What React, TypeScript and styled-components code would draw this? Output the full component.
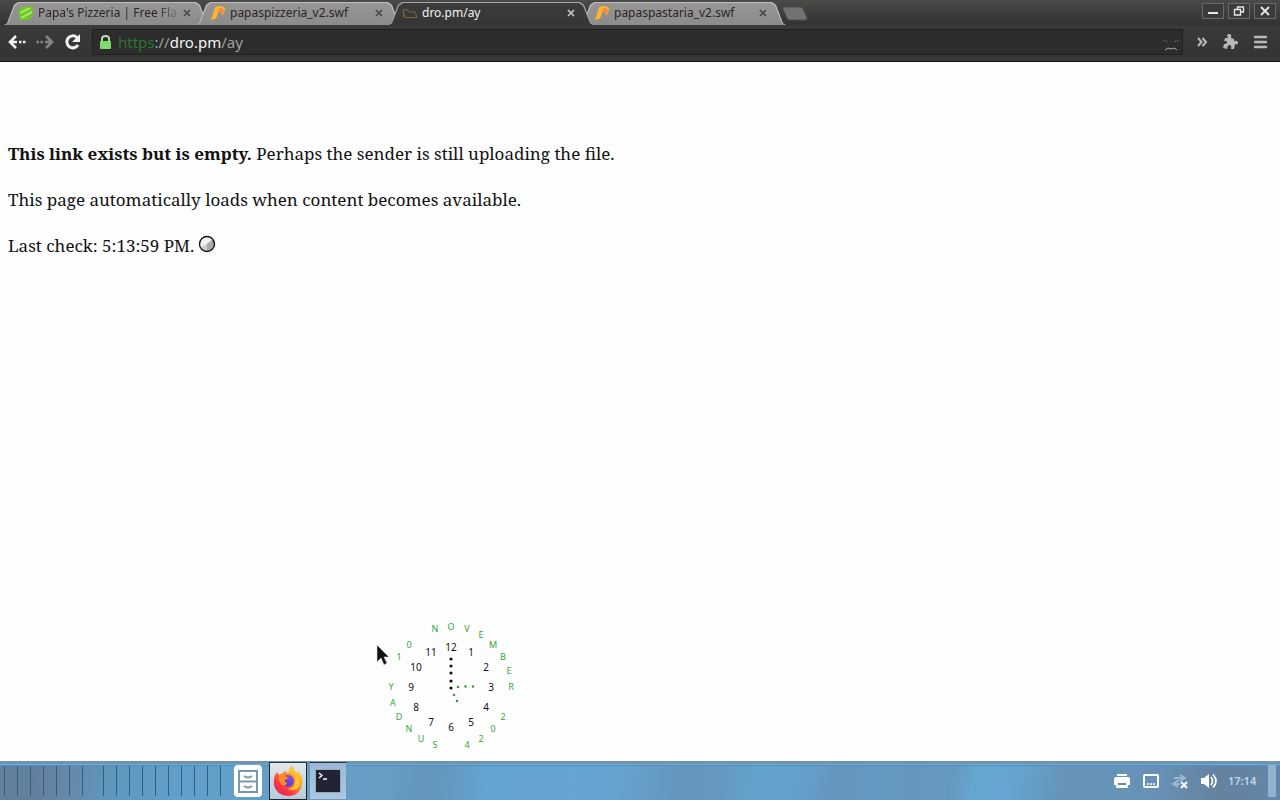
import React from "react";
import styled, { createGlobalStyle, css } from "styled-components";

const Global = createGlobalStyle`
  html, body { margin: 0; padding: 0; }
  body { background: #fefefe; }
  * { box-sizing: border-box; }
  button { font: inherit; border: 0; background: none; padding: 0; margin: 0; cursor: pointer; }
`;

const Desktop = styled.div`
  min-height: 100vh;
  display: flex;
  flex-direction: column;
  overflow: hidden;
  font-family: "Noto Sans", sans-serif;
`;

const TabStrip = styled.header`
  display: flex;
  height: 25px;
  padding: 2px 0 0 4px;
  background: linear-gradient(#4a4a49, #323232);
`;

const TabList = styled.nav`
  display: flex;
`;

const tabShape = "polygon(0 100%, 3px 92%, 10px 12%, 14px 0, calc(100% - 14px) 0, calc(100% - 10px) 12%, calc(100% - 3px) 92%, 100% 100%)";

const Tab = styled.div<{ $active?: boolean }>`
  position: relative;
  width: 206px;
  height: 23px;
  margin-right: -14px;
  padding: 0 15px 2px 14px;
  display: flex;
  align-items: center;
  z-index: ${(p) => (p.$active ? 2 : 1)};
  color: ${(p) => (p.$active ? "#f2f2f2" : "#2c2427")};
  &::before, &::after {
    content: "";
    position: absolute;
    inset: 0;
    z-index: -1;
    clip-path: ${tabShape};
    background: ${(p) => (p.$active ? "#a3a3a3" : "#bdbdbd")};
  }
  &::after {
    inset: 1px 1px 0;
    background: ${(p) => (p.$active ? "linear-gradient(#3d3d3d, #353535)" : "linear-gradient(#969696, #8b8b8b)")};
  }
`;

const TabLink = styled.a<{ $fade?: boolean }>`
  flex: 1;
  min-width: 0;
  margin-left: 4px;
  white-space: nowrap;
  color: inherit;
  text-decoration: none;
  font-size: 12px;
  line-height: 20px;
  ${(p) => p.$fade && css`mask-image: linear-gradient(90deg, #000 118px, transparent 144px);`}
`;

const TabClose = styled.button<{ $active?: boolean }>`
  width: 16px;
  height: 16px;
  display: grid;
  place-items: center;
  margin-left: 2px;
  color: ${(p) => (p.$active ? "#c9c9c9" : "#454a50")};
`;

const NewTab = styled.button`
  width: 26px;
  height: 16px;
  margin: 3px 0 0 10px;
`;

const WindowButtons = styled.div`
  display: flex;
  gap: 4px;
  margin: 1px 4px 0 auto;
`;

const WindowButton = styled.button`
  width: 22px;
  height: 16px;
  display: grid;
  place-items: center;
  border: 1px solid #6a6a6a;
  color: #e8e8e8;
  background: #3b3b3b;
`;

const Toolbar = styled.div`
  display: flex;
  align-items: center;
  height: 37px;
  padding: 0 7px 2px 5px;
  background: linear-gradient(#3a3a3a, #343434 32px, #3c3c3c);
  border-bottom: 1px solid #111;
`;

const ToolButton = styled.button<{ $dim?: boolean }>`
  width: 24px;
  height: 24px;
  margin-right: 4px;
  display: grid;
  place-items: center;
  color: ${(p) => (p.$dim ? "#858585" : "#f2f2f2")};
`;

const AddressBar = styled.div`
  flex: 1;
  height: 26px;
  display: flex;
  align-items: center;
  margin: 0 6px 0 3px;
  padding: 0 2px 0 6px;
  border: 1px solid #202020;
  background: #2c2c2c;
  font-size: 15px;
  line-height: 20px;
  color: #a0a0a0;
`;

const Address = styled.span`
  flex: 1;
  margin-left: 6px;
`;
const Scheme = styled.span`color: #2c752d;`;
const Host = styled.span`color: #f4f4f4;`;

const Menus = styled.div`
  display: flex;
  gap: 3px;
  & > button { margin: 0; width: 26px; color: #b8b8b8; }
`;

const Page = styled.main`
  position: relative;
  flex: 1;
  padding: 80px 8px 0;
  background: #fefefe;
  color: #111;
  font-family: "Noto Serif", "DejaVu Serif", serif;
  font-size: 17px;
  line-height: 23px;
  p { margin: 0 0 23px; }
  p svg { vertical-align: -1px; margin-left: -1px; }
`;

const ClockOverlay = styled.svg`
  position: absolute;
  left: 371px;
  top: 555px;
  font-family: "Noto Sans", sans-serif;
`;

const Taskbar = styled.footer`
  display: flex;
  align-items: center;
  height: 39px;
  padding: 0 4px 0 0;
  border-top: 1px solid #6f95ad;
  box-shadow: inset 0 1px #6f95ad, inset 0 2px #6f95ad, inset 0 3px #67aee0, inset 0 4px #568fbd;
  background: linear-gradient(98deg, #627f9e 0, #627f9e 3%, #6686a5 5%, #5f97bd 9%, #62a0cb 15%, #689dc3 30%, #6496bc 33%, #6598bf 35%, #64a4d1 38%, #66a3d0 48%, #6696bd 53%, #6697be 56%, #62a3cd 59%, #659fca 63%, #6695bc 65%, #6598c0 68%, #6697bd 74%, #65a6d1 76%, #65a4d0 79%, #6694b9 83%, #6692b7 90%, #66829f 95%, #6286aa);
`;

const Pager = styled.div<{ $count: number }>`
  width: ${(p) => p.$count * 13}px;
  height: 30px;
  background: repeating-linear-gradient(90deg, #315f7d 0 1px, transparent 1px 13px);
`;

const Pagers = styled.div`
  display: flex;
  gap: 8px;
  padding: 0 0 0 4px;
`;

const TaskButton = styled.button<{ $tone?: "light" | "blue" }>`
  width: ${(p) => (p.$tone ? 38 : 30)}px;
  height: 38px;
  margin-right: ${(p) => (p.$tone ? 2 : 6)}px;
  display: grid;
  place-items: center;
  ${(p) => p.$tone && css`
    border: 1px solid ${p.$tone === "light" ? "#1d2730" : "#7298b8"};
    border-top-color: #263746;
    background: ${p.$tone === "light" ? "linear-gradient(#e2e7eb, #b6cbd9)" : "linear-gradient(#9bb9d6, #a9c9e5)"};
  `}
`;

const Tray = styled.div`
  display: flex;
  align-items: center;
  margin-left: auto;
  color: #fff;
`;

const TrayButton = styled.button`
  width: 20px;
  height: 20px;
  margin-right: 9px;
  display: grid;
  place-items: center;
  color: #fff;
`;

const Time = styled.time`
  width: 32px;
  margin-right: 8px;
  font-size: 11px;
  line-height: 16px;
  font-weight: 600;
  color: #c3d6e9;
`;

const ShowDesktop = styled.button`
  width: 8px;
  height: 32px;
  background: #93b1cc;
`;

const Cross = () => (
  <svg width="8" height="8" viewBox="0 0 8 8" stroke="currentColor" strokeWidth="1.7"><path d="M1 1l6 6M7 1L1 7" /></svg>
);

const GreenIcon = () => (
  <svg width="16" height="16" viewBox="0 0 16 16">
    <path d="M3 2L13 1Q15 1 15 3L14 12L10 15H3Q1 15 1 13V5Z" fill="#6cc52a" />
    <path d="M2 8L12 3M3 13L14 7" stroke="#a6e75f" strokeWidth="2" />
  </svg>
);

const FlashIcon = () => (
  <svg width="16" height="16" viewBox="0 0 16 16">
    <path d="M1 15L5 14Q8 12 8 7L11 7V10L14 9L15 4Q14 1 9 1Q5 1 4 5L3 9Z" fill="#fdb52c" />
    <path d="M9 3Q13 2 14 6L13 9L11 10V7Q9 6 8 7Z" fill="#ef8d48" />
  </svg>
);

const FolderIcon = () => (
  <svg width="16" height="16" viewBox="0 0 16 16" fill="none" stroke="#7d6936">
    <path d="M1.5 12.500V4.500H5L6.500 7H13L15 12.500H3L1 6" />
  </svg>
);

const tabs = [
  { title: "Papa's Pizzeria | Free Fla", icon: <GreenIcon />, fade: true },
  { title: "papaspizzeria_v2.swf", icon: <FlashIcon /> },
  { title: "dro.pm/ay", icon: <FolderIcon />, active: true },
  { title: "papaspastaria_v2.swf", icon: <FlashIcon /> },
];

const ring = "NOVEMBER 2024 SUNDAY 10 ";

function around(i: number, steps: number, radius: number, drop: number) {
  const a = (i / steps) * Math.PI * 2;
  return { x: Math.round(80 + Math.sin(a) * radius), y: Math.round(70 - Math.cos(a) * radius) + drop };
}

function Clock() {
  return (
    <ClockOverlay width="160" height="140" viewBox="0 0 160 140" role="img" aria-label="Clock">
      <g fontSize="9" fill="#2fa83a" textAnchor="middle">
        {ring.split("").map((c, i) => c !== " " && <text key={i} {...around(i - 1, 24, 60, 3)}>{c}</text>)}
      </g>
      <g fontSize="10" fill="#111" textAnchor="middle">
        {Array.from({ length: 12 }, (_, i) => <text key={i} {...around(i + 1, 12, 40, 4)}>{i + 1}</text>)}
      </g>
      <g fill="#111">
        {[42, 49, 56, 64, 71].map((y) => <circle key={y} cx="80" cy={y} r="1.6" />)}
      </g>
      <g fill="#3a9840">
        <circle cx="87" cy="70" r="1.300" /><circle cx="94.500" cy="69.500" r="1.300" /><circle cx="102" cy="69.500" r="1.300" />
        <circle cx="83" cy="78" r="1.300" /><circle cx="86" cy="84" r="1.300" />
      </g>
      <path d="M6 28V45L10 41L13 48L16 46L13 40H18Z" fill="#111" stroke="#ddd" strokeWidth=".6" />
    </ClockOverlay>
  );
}

export default function App() {
  return (
    <Desktop>
      <Global />
      <TabStrip>
        <TabList>
          {tabs.map((t) => (
            <Tab key={t.title} $active={t.active}>
              {t.icon}
              <TabLink href="#" $fade={t.fade}>{t.title}</TabLink>
              <TabClose aria-label="Close tab" $active={t.active}><Cross /></TabClose>
            </Tab>
          ))}
        </TabList>
        <NewTab aria-label="New tab">
          <svg width="26" height="16" viewBox="0 0 26 16"><path d="M2 1H18Q20 1 21 3L25 12Q25 14 23 14H8Q6 14 5 12L1 3Q1 1 2 1Z" fill="#707274" stroke="#505050" /></svg>
        </NewTab>
        <WindowButtons>
          <WindowButton aria-label="Minimize"><svg width="12" height="12"><path d="M1 8H11" stroke="currentColor" strokeWidth="2" /></svg></WindowButton>
          <WindowButton aria-label="Restore"><svg width="12" height="12" fill="none" stroke="currentColor" strokeWidth="1.300"><path d="M4.500 4V2H10.500V7H8M1.500 4.500H7.500V10H1.500Z" /></svg></WindowButton>
          <WindowButton aria-label="Close"><svg width="12" height="12" stroke="currentColor" strokeWidth="1.800"><path d="M2 2L10 10M10 2L2 10" /></svg></WindowButton>
        </WindowButtons>
      </TabStrip>

      <Toolbar>
        <ToolButton aria-label="Back">
          <svg width="20" height="18" viewBox="0 0 20 18" fill="none" stroke="currentColor" strokeWidth="2.600"><path d="M9 3L3 9L9 15M4 9H10M12 9H14.500M16 9H18.500" /></svg>
        </ToolButton>
        <ToolButton aria-label="Forward" $dim>
          <svg width="20" height="18" viewBox="0 0 20 18" fill="none" stroke="currentColor" strokeWidth="2.600"><path d="M11 3L17 9L11 15M16 9H10M8 9H5.500M4 9H1.500" /></svg>
        </ToolButton>
        <ToolButton aria-label="Reload">
          <svg width="18" height="18" viewBox="0 0 18 18"><path d="M14 12A6 6 0 1 1 13 4.500" fill="none" stroke="currentColor" strokeWidth="3" /><path d="M16 1V9H8Z" fill="currentColor" /></svg>
        </ToolButton>
        <AddressBar role="textbox" aria-label="Address" tabIndex={0}>
          <svg width="13" height="16" viewBox="0 0 13 16"><path d="M3 8V4.500Q3 2 6.500 2Q10 2 10 4.500V8" fill="none" stroke="#b9dcae" strokeWidth="2" /><rect x="1" y="7" width="11" height="8" rx="1" fill="#7fdc69" /></svg>
          <Address><Scheme>https</Scheme>://<Host>dro.pm</Host>/ay</Address>
          <svg width="18" height="18" viewBox="0 0 18 18" fill="none"><path d="M3 17L6 15L9 16L12 15L15 17" stroke="#aaa" /><path d="M1 7L6 9M17 7L12 9" stroke="#6c6c6c" strokeDasharray="2 1" /></svg>
        </AddressBar>
        <Menus>
          <ToolButton aria-label="More"><svg width="12" height="10" fill="none" stroke="currentColor" strokeWidth="2"><path d="M2 1L5.500 5L2 9M6.500 1L10 5L6.500 9" /></svg></ToolButton>
          <ToolButton aria-label="Extensions"><svg width="16" height="16" viewBox="0 0 16 16"><path d="M2 4H5Q3 0 6 0Q9 0 8 4L11 5L11 7Q15 6 15 9Q15 11 12 10L11 15H8Q9 11 6.500 11Q4.500 11 4 15L0 14L1 10Q4 10 4 8Q3 6 1 7Z" fill="currentColor" /></svg></ToolButton>
          <ToolButton aria-label="Menu"><svg width="15" height="14" stroke="currentColor" strokeWidth="2.400" strokeLinecap="round"><path d="M2 2H13M2 7H13M2 12H13" /></svg></ToolButton>
        </Menus>
      </Toolbar>

      <Page>
        <p><b>This link exists but is empty.</b> Perhaps the sender is still uploading the file.</p>
        <p>This page automatically loads when content becomes available.</p>
        <p>
          Last check: 5:13:59 PM.{" "}
          <svg width="18" height="18" viewBox="0 0 18 18">
            <circle cx="9" cy="9" r="7.500" fill="#f0f0f0" />
            <path d="M15 4A7.500 7.500 0 1 1 3 13Q7 10 9 9Z" fill="#a9a9a9" />
            <path d="M9 9L3 13A7.500 7.500 0 0 0 9 16.500Z" fill="#ccc" />
            <circle cx="9" cy="9" r="7.500" fill="none" stroke="#161616" strokeWidth="1.400" />
          </svg>
        </p>
        <Clock />
      </Page>

      <Taskbar>
        <Pagers><Pager $count={7} /><Pager $count={10} /></Pagers>
        <TaskButton aria-label="Files">
          <svg width="28" height="34" viewBox="0 0 28 34"><rect y="1" width="28" height="32" rx="4" fill="#fff" /><g fill="none" stroke="#7798ad" strokeWidth="2"><path d="M5 7H23V28H5ZM5 17.500H23" /><path d="M10 12Q14 15 18 12M10 22Q14 25 18 22" /></g></svg>
        </TaskButton>
        <TaskButton aria-label="Firefox" $tone="light">
          <svg width="32" height="32" viewBox="0 0 32 32">
            <defs>
              <linearGradient id="fox" x1="1" y1="0" x2=".2" y2="1"><stop offset="0" stopColor="#fff13d" /><stop offset=".4" stopColor="#ff9827" /><stop offset=".75" stopColor="#fb3a40" /><stop offset="1" stopColor="#e92462" /></linearGradient>
              <linearGradient id="globe" x1="1" y1="0" x2="0" y2="1"><stop offset="0" stopColor="#9c45dd" /><stop offset="1" stopColor="#4540ce" /></linearGradient>
            </defs>
            <path d="M5 7L7 10L11 8L13 6Q15 8 17 8Q16 4 20 1Q21 5 25 8L27 7Q31 12 30 19Q28 31 16 31Q4 30 2 20Q1 12 5 7Z" fill="url(#fox)" />
            <circle cx="16" cy="16" r="6" fill="url(#globe)" />
            <path d="M7 10Q10 8 13 11L17 13L13 15Q12 17 15 18Q14 22 10 20Q6 17 7 10Z" fill="#ff8a22" />
            <path d="M17 7Q25 9 23 17Q22 23 16 24Q25 27 28 20Q29 12 23 8Q22 4 20 1Q16 4 17 7Z" fill="#ffc32e" />
          </svg>
        </TaskButton>
        <TaskButton aria-label="Terminal" $tone="blue">
          <svg width="26" height="24" viewBox="0 0 26 24"><rect x=".500" y=".500" width="25" height="23" fill="#222333" stroke="#98a9b9" /><path d="M4 4L7 6.500L4 9M8 10H12" fill="none" stroke="#fff" strokeWidth="1.300" /></svg>
        </TaskButton>
        <Tray>
          <TrayButton aria-label="Printer"><svg width="18" height="16" viewBox="0 0 18 16"><path d="M4 1H14V3H4ZM3 4H15Q17 4 17 6V12H15V14Q15 15 14 15H4Q3 15 3 14V12H1V6Q1 4 3 4Z" fill="#fff" /><path d="M5 10H13V12H5Z" fill="#6686a7" /></svg></TrayButton>
          <TrayButton aria-label="Display"><svg width="16" height="16" fill="none" stroke="#fff" strokeWidth="2"><rect x="1" y="2" width="14" height="12" rx="1" /><path d="M4 11H12" strokeDasharray="2 1" strokeWidth="1.500" /></svg></TrayButton>
          <TrayButton aria-label="Network disconnected"><svg width="18" height="18" viewBox="0 0 18 18" fill="none"><path d="M9 3L14 6L9 9M3 6H13M8 8L2 12L7 15M2 12H9" stroke="#9db8d2" strokeWidth="1.800" /><path d="M10 10L16 16M16 10L10 16" stroke="#fff" strokeWidth="2" /></svg></TrayButton>
          <TrayButton aria-label="Volume"><svg width="18" height="16" viewBox="0 0 18 16"><path d="M1 5H4L9 1V15L4 11H1Z" fill="#fff" /><path d="M11 4Q14 8 11 12M13 1.500Q19 8 13 14.500" fill="none" stroke="#fff" strokeWidth="1.700" /></svg></TrayButton>
          <Time>17:14</Time>
          <ShowDesktop aria-label="Show desktop" />
        </Tray>
      </Taskbar>
    </Desktop>
  );
}
